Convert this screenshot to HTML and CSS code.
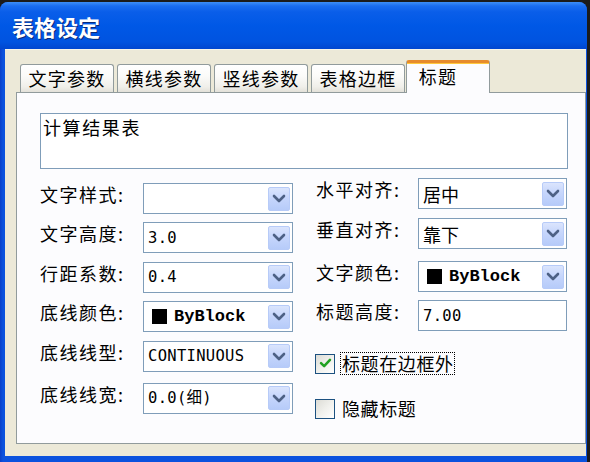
FILE: index.html
```html
<!DOCTYPE html>
<html lang="zh">
<head>
<meta charset="utf-8">
<title>表格设定</title>
<link rel="stylesheet" href="styles.css">
</head>
<body>
<div class="window">
  <div class="titlebar"><span class="title">表格设定</span></div>
  <div class="client">
    <div class="tabs">
      <div class="tab">文字参数</div>
      <div class="tab">横线参数</div>
      <div class="tab">竖线参数</div>
      <div class="tab">表格边框</div>
      <div class="tab active">标题</div>
    </div>
    <div class="panel">
      <div class="textarea">计算结果表</div>
      <div class="form">
        <div class="col col-left">
          <div class="row">
            <span class="label">文字样式:</span>
            <div class="select"><span class="value"></span><span class="btn"><svg viewBox="0 0 14 9" width="14" height="9"><path d="M2 2 L7 7 L12 2" fill="none" stroke="#4d6185" stroke-width="2.6" stroke-linecap="round" stroke-linejoin="round"/></svg></span></div>
          </div>
          <div class="row">
            <span class="label">文字高度:</span>
            <div class="select"><span class="value mono">3.0</span><span class="btn"><svg viewBox="0 0 14 9" width="14" height="9"><path d="M2 2 L7 7 L12 2" fill="none" stroke="#4d6185" stroke-width="2.6" stroke-linecap="round" stroke-linejoin="round"/></svg></span></div>
          </div>
          <div class="row">
            <span class="label">行距系数:</span>
            <div class="select"><span class="value mono">0.4</span><span class="btn"><svg viewBox="0 0 14 9" width="14" height="9"><path d="M2 2 L7 7 L12 2" fill="none" stroke="#4d6185" stroke-width="2.6" stroke-linecap="round" stroke-linejoin="round"/></svg></span></div>
          </div>
          <div class="row">
            <span class="label">底线颜色:</span>
            <div class="select"><span class="value color"><span class="swatch"></span><span class="bold-mono">ByBlock</span></span><span class="btn"><svg viewBox="0 0 14 9" width="14" height="9"><path d="M2 2 L7 7 L12 2" fill="none" stroke="#4d6185" stroke-width="2.6" stroke-linecap="round" stroke-linejoin="round"/></svg></span></div>
          </div>
          <div class="row">
            <span class="label">底线线型:</span>
            <div class="select"><span class="value mono">CONTINUOUS</span><span class="btn"><svg viewBox="0 0 14 9" width="14" height="9"><path d="M2 2 L7 7 L12 2" fill="none" stroke="#4d6185" stroke-width="2.6" stroke-linecap="round" stroke-linejoin="round"/></svg></span></div>
          </div>
          <div class="row row-last">
            <span class="label">底线线宽:</span>
            <div class="select"><span class="value mono">0.0(细)</span><span class="btn"><svg viewBox="0 0 14 9" width="14" height="9"><path d="M2 2 L7 7 L12 2" fill="none" stroke="#4d6185" stroke-width="2.6" stroke-linecap="round" stroke-linejoin="round"/></svg></span></div>
          </div>
        </div>
        <div class="col col-right">
          <div class="row">
            <span class="label">水平对齐:</span>
            <div class="select"><span class="value">居中</span><span class="btn"><svg viewBox="0 0 14 9" width="14" height="9"><path d="M2 2 L7 7 L12 2" fill="none" stroke="#4d6185" stroke-width="2.6" stroke-linecap="round" stroke-linejoin="round"/></svg></span></div>
          </div>
          <div class="row r2">
            <span class="label">垂直对齐:</span>
            <div class="select"><span class="value">靠下</span><span class="btn"><svg viewBox="0 0 14 9" width="14" height="9"><path d="M2 2 L7 7 L12 2" fill="none" stroke="#4d6185" stroke-width="2.6" stroke-linecap="round" stroke-linejoin="round"/></svg></span></div>
          </div>
          <div class="row r3">
            <span class="label">文字颜色:</span>
            <div class="select"><span class="value color"><span class="swatch"></span><span class="bold-mono">ByBlock</span></span><span class="btn"><svg viewBox="0 0 14 9" width="14" height="9"><path d="M2 2 L7 7 L12 2" fill="none" stroke="#4d6185" stroke-width="2.6" stroke-linecap="round" stroke-linejoin="round"/></svg></span></div>
          </div>
          <div class="row r4">
            <span class="label">标题高度:</span>
            <div class="input"><span class="value mono">7.00</span></div>
          </div>
          <div class="check-row c1">
            <span class="checkbox"><svg viewBox="0 0 19 19" width="17" height="17"><path d="M4.5 9 L8 12.5 L14.5 5.5" fill="none" stroke="#21a121" stroke-width="2.8" stroke-linecap="round" stroke-linejoin="round"/></svg></span>
            <span class="check-label focus">标题在边框外</span>
          </div>
          <div class="check-row c2">
            <span class="checkbox"></span>
            <span class="check-label">隐藏标题</span>
          </div>
        </div>
      </div>
    </div>
  </div>
</div>
</body>
</html>
```

FILE: styles.css
```css
* { box-sizing: border-box; }

html, body {
  margin: 0;
  padding: 0;
}

body {
  width: 590px;
  height: 462px;
  overflow: hidden;
  background: #1b1b1b;
  font-family: "Noto Sans CJK SC", "Noto Sans", sans-serif;
  color: #000;
}

.window {
  width: 587px;
  height: 460px;
  margin-top: 2px;
  border-radius: 8px 8px 0 0;
  background: linear-gradient(90deg, #0a3fc8 0, #0b52de 3px, #0b52de 100%);
  display: flex;
  flex-direction: column;
  overflow: hidden;
}

.titlebar {
  height: 47px;
  flex: none;
  background: linear-gradient(180deg, #3d8ff7 0, #1a6df0 4px, #0a5ee9 10px, #0058e6 50%, #0053e0 85%, #0046cf 100%);
  padding-left: 12px;
  display: flex;
  align-items: center;
}

.title {
  color: #fff;
  font-size: 22px;
  font-weight: 700;
  letter-spacing: 0;
  text-shadow: 1px 1px 0 #0a2a7a;
  line-height: 1;
}

.client {
  flex: 1;
  margin: 0 1px 6px 5px;
  background: #ece9d8;
  border-top: 1px solid #f6f4ea;
  padding: 10px 0 12px 11px;
  display: flex;
  flex-direction: column;
}

.tabs {
  height: 32px;
  display: flex;
  align-items: flex-end;
  padding-left: 4px;
  position: relative;
  z-index: 1;
}

.tab {
  height: 28px;
  width: 94px;
  margin-right: 3px;
  border: 1px solid #919b9c;
  border-bottom: none;
  border-radius: 3px 3px 0 0;
  background: linear-gradient(180deg, #ffffff 0, #fbfbf9 40%, #f0efea 80%, #e3e1d9 100%);
  font-size: 18px;
  letter-spacing: 1.2px;
  line-height: 26px;
  text-align: center;
  white-space: nowrap;
}

.tab.active {
  height: 33px;
  width: 84px;
  margin-left: -2px;
  margin-bottom: -1px;
  border-top: 3px solid #e68b2c;
  box-shadow: inset 0 1px 0 #ffc83c;
  background: #fcfcfe;
  line-height: 26px;
  padding-right: 20px;
}

.panel {
  flex: 1;
  background: #fcfcfe;
  border: 1px solid #919b9c;
  padding: 20px 18px 0 23px;
}

.textarea {
  height: 56px;
  width: 528px;
  border: 1px solid #7f9db9;
  background: #fff;
  font-size: 18px;
  letter-spacing: 1.6px;
  line-height: 22px;
  padding: 2px 0 0 2px;
}

.form {
  display: flex;
  gap: 23px;
}

.col {
  display: flex;
  flex-direction: column;
}

.col-left {
  margin-top: 14px;
  gap: 8.4px;
}

.col-right {
  margin-top: 9px;
}

.row {
  display: flex;
  align-items: flex-start;
  height: 31px;
}

.row-last { margin-top: 3px; }
.r2 { margin-top: 9px; }
.r3 { margin-top: 12px; }
.r4 { margin-top: 8px; }

.label {
  font-size: 18px;
  letter-spacing: 1.5px;
  line-height: 22px;
  white-space: nowrap;
}

.col-left .label { width: 103px; }
.col-right .label { width: 102px; }

.select, .input {
  height: 31px;
  border: 1px solid #7f9db9;
  background: #fff;
  display: flex;
  align-items: center;
  padding: 3px 2px 3px 0;
}

.col-left .select { width: 150px; }
.col-right .select, .input { width: 149px; }

.value {
  flex: 1;
  font-size: 18px;
  padding-left: 4px;
  white-space: nowrap;
  line-height: 22px;
}

.value.mono {
  font-family: "DejaVu Sans Mono", "Noto Sans CJK SC", monospace;
  font-size: 15.5px;
  letter-spacing: 0.3px;
}

.value.color {
  display: flex;
  align-items: center;
  padding-left: 8px;
}

.swatch {
  width: 15px;
  height: 15px;
  background: #000;
  margin-right: 7px;
}

.bold-mono {
  font-family: "Liberation Mono", monospace;
  font-weight: 700;
  font-size: 17px;
}

.btn {
  width: 22px;
  height: 24px;
  flex: none;
  border: 1px solid #b7cbf8;
  border-radius: 2px;
  background: linear-gradient(180deg, #dbe5fd 0, #c6d6fc 45%, #b6cbf9 100%);
  display: flex;
  align-items: center;
  justify-content: center;
}

.check-row {
  display: flex;
  align-items: center;
  height: 23px;
}

.c1 { margin-top: 21px; }
.c2 { margin-top: 22px; }

.checkbox {
  width: 20px;
  height: 20px;
  flex: none;
  border: 1px solid #1c5180;
  background: linear-gradient(135deg, #dcdcd6 0, #f0f0ec 50%, #ffffff 100%);
  display: flex;
  align-items: center;
  justify-content: center;
  margin-left: -1px;
}

.check-label {
  margin-left: 5px;
  font-size: 18px;
  letter-spacing: 0.6px;
  line-height: 21px;
  padding: 0 0 0 1px;
  border: 1px solid transparent;
}

.check-label.focus {
  border: 1px dotted #000;
}
```
